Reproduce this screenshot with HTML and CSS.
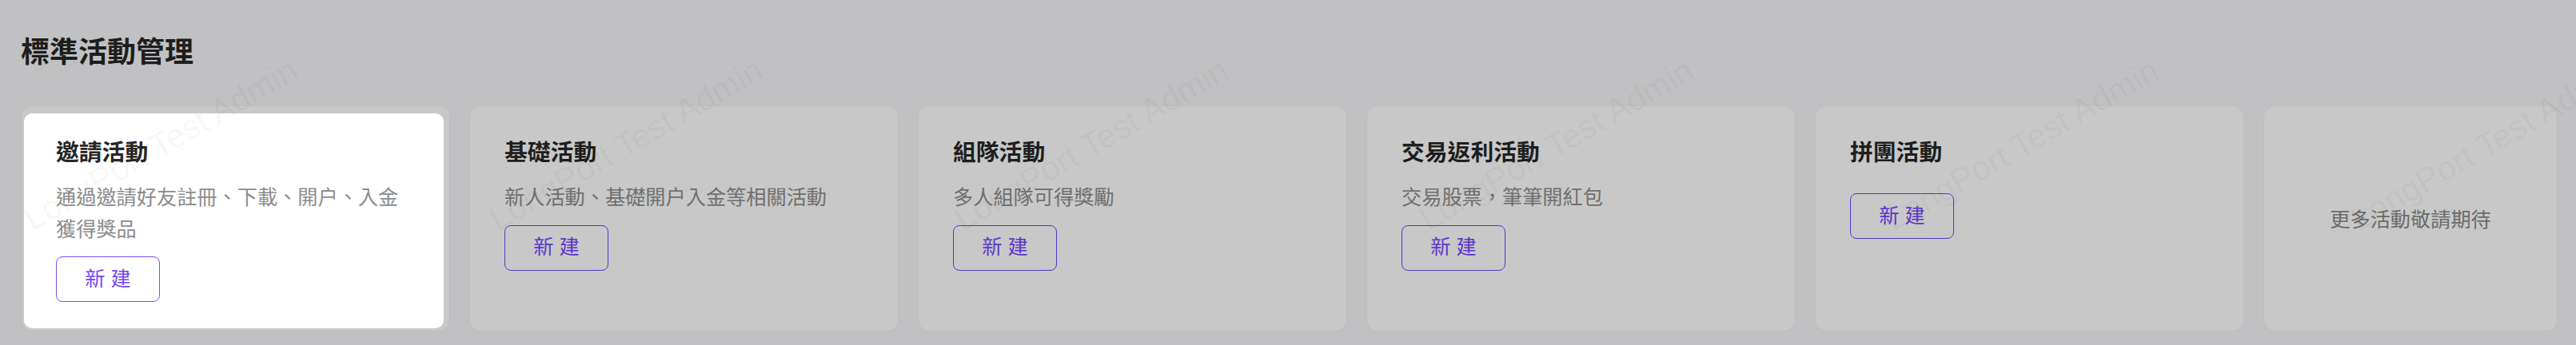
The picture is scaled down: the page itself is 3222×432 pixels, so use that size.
FILE: index.html
```html
<!DOCTYPE html>
<html lang="zh-Hant">
<head>
<meta charset="utf-8">
<title>標準活動管理</title>
<link rel="stylesheet" href="styles.css">
</head>
<body>
<div class="page">
  <h1 class="page-title">標準活動管理</h1>
  <div class="card-row">
    <div class="card card--spotlight">
      <div class="card-body">
        <div class="card-title">邀請活動</div>
        <div class="card-desc">通過邀請好友註冊、下載、開户、入金獲得獎品</div>
        <button class="btn">新 建</button>
      </div>
    </div>
    <div class="card">
      <div class="card-body">
        <div class="card-title">基礎活動</div>
        <div class="card-desc">新人活動、基礎開户入金等相關活動</div>
        <button class="btn">新 建</button>
      </div>
    </div>
    <div class="card">
      <div class="card-body">
        <div class="card-title">組隊活動</div>
        <div class="card-desc">多人組隊可得獎勵</div>
        <button class="btn">新 建</button>
      </div>
    </div>
    <div class="card">
      <div class="card-body">
        <div class="card-title">交易返利活動</div>
        <div class="card-desc">交易股票，筆筆開紅包</div>
        <button class="btn">新 建</button>
      </div>
    </div>
    <div class="card">
      <div class="card-body">
        <div class="card-title">拼團活動</div>
        <div class="card-desc"></div>
        <button class="btn">新 建</button>
      </div>
    </div>
    <div class="card card--more">
      <div class="more-text">更多活動敬請期待</div>
    </div>
  </div>
</div>
<div class="watermarks" aria-hidden="true">
  <span class="wm wm-1">LongPort Test Admin</span>
  <span class="wm wm-2">LongPort Test Admin</span>
  <span class="wm wm-3">LongPort Test Admin</span>
  <span class="wm wm-4">LongPort Test Admin</span>
  <span class="wm wm-5">LongPort Test Admin</span>
  <span class="wm wm-6">LongPort Test Admin</span>
</div>
</body>
</html>
```

FILE: styles.css
```css
* { box-sizing: border-box; }

html, body {
  margin: 0;
  padding: 0;
  background: #c1c1c3;
  overflow: hidden;
}

body {
  width: 3222px;
  height: 432px;
  position: relative;
  font-family: "Liberation Sans", "Noto Sans CJK TC", sans-serif;
}

.page {
  padding: 35px 23px 0 26px;
}

.page-title {
  margin: 0;
  font-size: 36px;
  line-height: 54px;
  font-weight: 700;
  color: #1e1e1e;
  font-family: "Noto Sans CJK TC", sans-serif;
}

.card-row {
  display: flex;
  gap: 24px;
  margin-top: 43px;
}

.card {
  position: relative;
  flex: 0 0 537px;
  height: 283px;
  background: #c8c8c8;
  border: 1px solid #bdbdbe;
  border-radius: 14px;
}

.card--spotlight::before {
  content: "";
  position: absolute;
  top: 9px;
  left: 3px;
  right: 7px;
  bottom: 3px;
  background: #ffffff;
  border-radius: 10px;
}

.card-body {
  position: relative;
  display: flex;
  flex-direction: column;
  align-items: flex-start;
  padding: 34px 43px 0;
}

.card-title {
  font-family: "Noto Sans CJK TC", sans-serif;
  font-size: 28.8px;
  line-height: 43px;
  font-weight: 700;
  color: #1e1e1e;
  margin-bottom: 16px;
}

.card-desc {
  font-family: "Noto Sans CJK TC", sans-serif;
  font-size: 25.2px;
  line-height: 39.6px;
  color: #6f6f6f;
  margin-bottom: 16px;
}

.btn {
  display: block;
  width: 130px;
  height: 57px;
  padding: 0;
  background: transparent;
  border: 1px solid #5a36c9;
  border-radius: 8px;
  color: #5a36c9;
  font-family: "Liberation Sans", "Noto Sans CJK TC", sans-serif;
  font-size: 25.2px;
  line-height: 1;
}

.card--spotlight .card-title { color: #262626; }
.card--spotlight .card-desc { color: #8c8c8c; }
.card--spotlight .btn {
  border-color: #7d4ff7;
  color: #7447f2;
}

.card--more {
  flex: 1 1 auto;
  display: flex;
  align-items: center;
  justify-content: center;
}

.more-text {
  font-family: "Noto Sans CJK TC", sans-serif;
  font-size: 25.2px;
  line-height: 39.6px;
  color: #6b6b6b;
}

.watermarks {
  position: absolute;
  inset: 0;
  pointer-events: none;
  overflow: hidden;
}

.wm {
  position: absolute;
  top: 254px;
  font-family: "Liberation Sans", sans-serif;
  font-size: 42px;
  line-height: 42px;
  white-space: nowrap;
  color: rgba(0, 0, 0, 0.035);
  transform: rotate(-30deg);
  transform-origin: 0 100%;
}

.wm-1 { left: 44px; }
.wm-2 { left: 626px; }
.wm-3 { left: 1208px; }
.wm-4 { left: 1790px; }
.wm-5 { left: 2372px; }
.wm-6 { left: 2954px; }
```
